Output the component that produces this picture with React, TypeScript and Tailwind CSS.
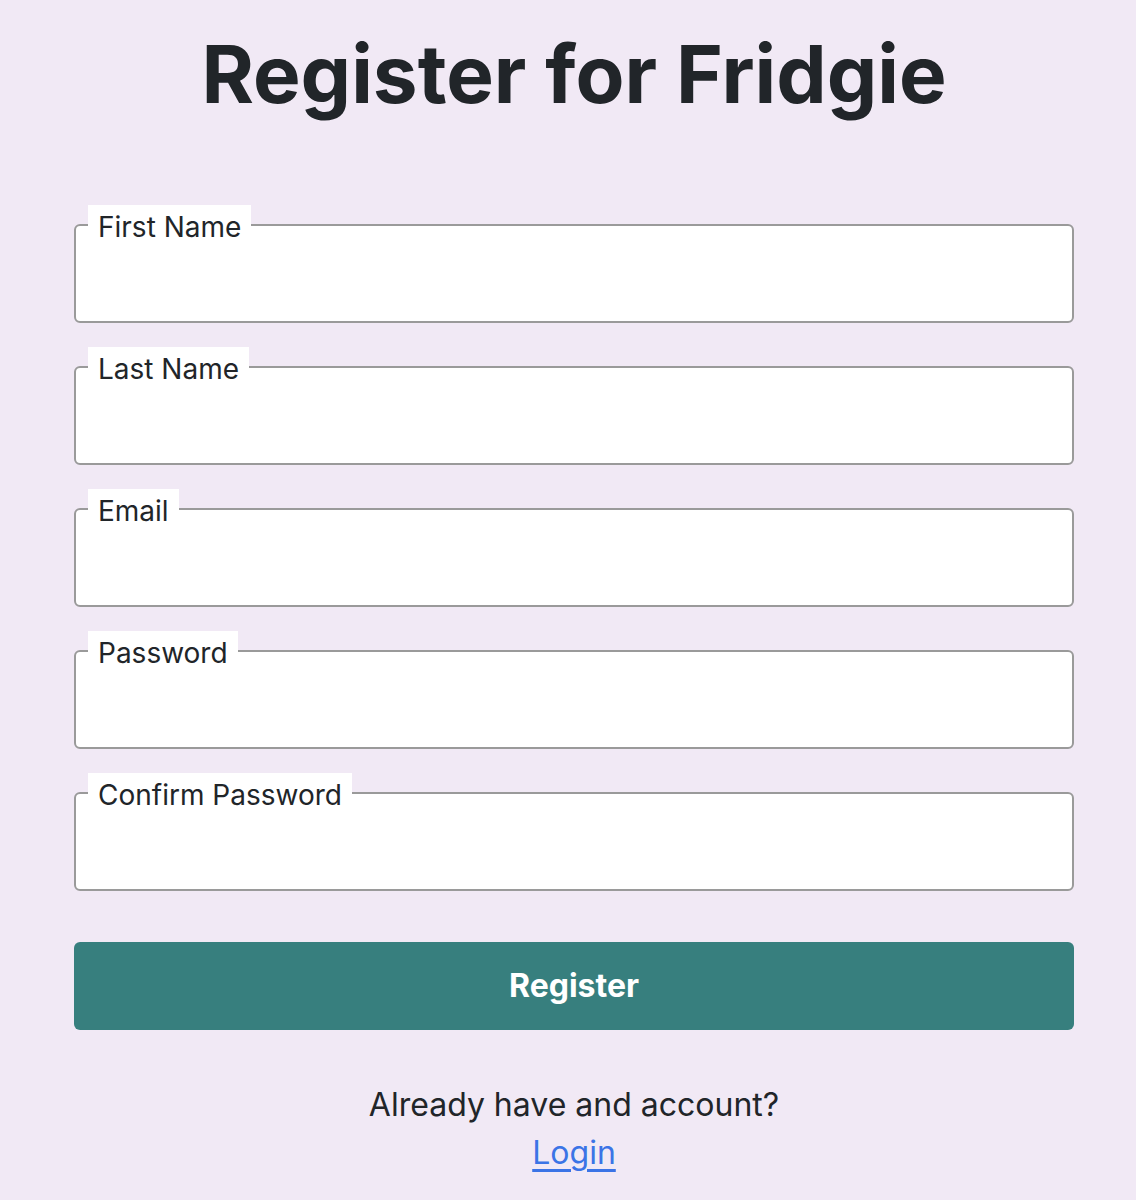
const fields = ["First Name", "Last Name", "Email", "Password", "Confirm Password"];

function Field({ label }: { label: string }) {
  return (
    <div className="relative pt-[19px]">
      <span className="absolute left-[14px] top-0 bg-white px-[10px] pt-[2px] text-[28px] leading-[40px] text-[#212529]">
        {label}
      </span>
      <input
        type={label.includes("Password") ? "password" : "text"}
        className="block h-[99px] w-full rounded-[6px] border-2 border-[#9a9a9a] bg-white outline-none"
      />
    </div>
  );
}

export default function App() {
  return (
    <div className="min-h-[1200px] bg-[#f1e9f5] font-['Inter',sans-serif] text-[#212529]">
      <div className="ml-[74px] w-[1000px] pt-[26px]">
        <h1 className="text-center text-[80px] font-bold leading-[96px]">Register for Fridgie</h1>
        <form className="mt-[83px] flex flex-col gap-[24px]">
          {fields.map((f) => (
            <Field key={f} label={f} />
          ))}
        </form>
        <button className="mt-[51px] h-[88px] w-full rounded-[6px] bg-[#377f7e] text-[32px] font-bold text-white">
          Register
        </button>
        <div className="mt-[51px] flex flex-col items-center text-[32px] leading-[48px]">
          <p>Already have and account?</p>
          <a href="#" className="text-[#3b74e6] underline underline-offset-[5px]">
            Login
          </a>
        </div>
      </div>
    </div>
  );
}
